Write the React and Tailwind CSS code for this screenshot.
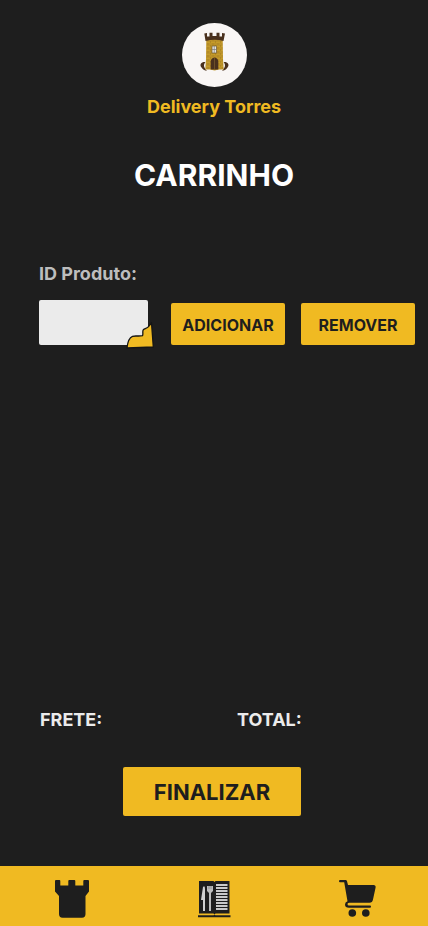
function TowerLogo() {
  return (
    <svg viewBox="0 0 65 64" className="h-16 w-[65px]" role="img" aria-label="Delivery Torres">
      <defs>
        <pattern id="bricks" width="5" height="4" patternUnits="userSpaceOnUse">
          <rect width="5" height="4" fill="#c59b2a" />
          <path d="M0 0H5M0 2H5M1 0V2M3.500 2V4" stroke="#94701c" strokeWidth="0.4" />
        </pattern>
      </defs>
      <ellipse cx="32.500" cy="32" rx="32.500" ry="32" fill="#f9f6f5" />
      <path d="M23.500 39C19.500 38.500 17 41.500 19.500 44.500C21 46.700 23 47.500 25 48C22.500 45 20.500 42.500 23.500 39Z" fill="#49301d" />
      <path d="M41.500 39C45.500 38.500 48 41.500 45.500 44.500C44 46.700 42 47.500 40 48C42.500 45 44.500 42.500 41.500 39Z" fill="#49301d" />
      <path d="M24.300 16H40.700L41 36L41.700 46.500H37L32.500 47.500L28 46.500H23.300L24 36Z" fill="url(#bricks)" />
      <path d="M22.300 10.500L25 10V13.500H27.500V9.700H30.500V13H34.500V9.700H37.500V13.500H40V10L43 10.500L41.500 18Q32.500 15.500 23.500 18Z" fill="#49301d" />
      <rect x="30" y="23" width="4.500" height="7" fill="#e7e5df" stroke="#6e582d" strokeWidth="0.700" />
      <path d="M32.250 23V30M30 26.500H34.500" stroke="#77797a" strokeWidth="0.700" />
      <path d="M28.700 46.500V38.500Q29 35 32.500 34.500Q36 35 36.300 38.500V46.500Z" fill="#49301d" />
      <path d="M32.500 35V46" stroke="#926e32" strokeWidth="0.500" />
    </svg>
  );
}

function TowerIcon() {
  return (
    <svg viewBox="0 0 34 38" className="h-[38px] w-[34px]" fill="#1e1e1e" aria-hidden="true">
      <path d="M0 1Q0 0 1 0H4.500Q5.300 0 5.300 1V5.500H13.300V1Q13.300 0 14.300 0H19.300Q20.300 0 20.300 1V5.500H28.300V1Q28.300 0 29.300 0H33Q34 0 34 1V11.500L30.500 16V34Q30.500 37.700 27 37.700H7.500Q4 37.700 4 34V16L0 11.500Z" />
    </svg>
  );
}

function MenuIcon() {
  return (
    <svg viewBox="0 0 33 38" className="h-[38px] w-[33px]" aria-hidden="true">
      <path d="M1 1H15.500L16.500 2L17.500 1H31.500V33.500H17.500L16.500 34.500L15.500 33.500H1Z" fill="#1e1e1e" />
      <path d="M0 35.300H15.500L16.500 34.800L17.500 35.300H32.500V37.300H0Z" fill="#1e1e1e" />
      <path d="M5 7Q7 5 7 9V31H5V20H3Z" fill="#d0d0d0" />
      <path d="M9 6H15V11L13 13V31H11V13L9 11Z" fill="#bcbcbc" />
      <path d="M11 6V9M13 6V9" stroke="#777" strokeWidth="0.600" />
      <path d="M18 5H29.500M18 8H29.500M18 11H29.500M18 14H29.500M18 17H29.500M18 20H29.500M18 23H29.500M18 26H29.500M18 29H29.500" stroke="#c9c9c9" strokeWidth="2" />
    </svg>
  );
}

function CartIcon() {
  return (
    <svg viewBox="0 0 37 38" className="h-[38px] w-[37px]" fill="#1e1e1e" aria-hidden="true">
      <path d="M1 0H6.500Q7.700 0 8 1.200L9 5H34.500Q37 5 36.600 7.500L34 19.500Q33.300 22.700 30.500 22.700H10.500Q8.500 22.700 8.500 24Q8.500 25.500 10 25.500H31Q32 25.500 32 26.600Q32 27.800 31 27.800H10Q6 27.800 6 24.500Q6 22 8.500 21.300L5.200 2.300H1Q0 2.300 0 1.200Q0 0 1 0Z" />
      <circle cx="13.300" cy="33" r="3.800" />
      <circle cx="26.800" cy="33" r="3.800" />
    </svg>
  );
}

export default function App() {
  return (
    <div className="flex min-h-screen flex-col bg-[#1e1e1e] font-['Inter',sans-serif] font-bold">
      <header className="flex flex-col items-center pt-[23px]">
        <TowerLogo />
        <p className="mt-2 text-lg leading-6 text-[#f0ba22]">Delivery Torres</p>
        <h1 className="mt-9 text-3xl leading-10 text-white">CARRINHO</h1>
      </header>

      <main className="flex grow flex-col">
        <form className="mt-[67px] pr-[13px] pl-[39px]" onSubmit={(event) => event.preventDefault()}>
          <label htmlFor="product-id" className="block text-lg leading-6 text-[#bdbdbd]">
            ID Produto:
          </label>
          <div className="mt-[14px] flex items-end gap-4">
            <div className="relative mr-[7px] grow">
              <input id="product-id" type="text" className="block h-[45px] w-full min-w-0 rounded-xs bg-[#ebebeb] px-3 text-[#1e1e1e]" />
              <svg viewBox="0 0 28 27" className="pointer-events-none absolute -right-1.5 -bottom-1 h-[27px] w-7" aria-hidden="true">
                <path d="M1 26C1.500 21 3.500 15.500 6.500 14.300C9 13.500 13 14.500 16.500 13.700C17.500 11.500 16 9 17.500 7.500C19 6.500 22 6 23 4L25.500 0.800L27.300 25Z" fill="#f0ba22" stroke="#151515" strokeWidth="1.300" strokeLinejoin="round" />
              </svg>
            </div>
            <button type="submit" className="h-[42px] w-[114px] shrink-0 rounded-xs bg-[#f0ba22] pt-0.5 text-base text-[#1e1e1e]">
              ADICIONAR
            </button>
            <button type="button" className="h-[42px] w-[114px] shrink-0 rounded-xs bg-[#f0ba22] pt-0.5 text-base text-[#1e1e1e]">
              REMOVER
            </button>
          </div>
        </form>

        <section className="mt-auto flex flex-col pb-[50px]">
          <div className="grid grid-cols-2 gap-x-[6px] pl-10 text-lg leading-6 text-[#ebebeb]">
            <p>FRETE:</p>
            <p>TOTAL:</p>
          </div>
          <div className="mt-[35px] flex justify-center pr-1">
            <button type="button" className="h-[49px] w-[178px] rounded-xs bg-[#f0ba22] pt-0.5 text-[22px] text-[#1e1e1e]">
              FINALIZAR
            </button>
          </div>
        </section>
      </main>

      <nav className="grid h-[60px] grid-cols-3 items-center justify-items-center gap-x-0.5 bg-[#f0ba22] pt-1.5 pl-0.5" aria-label="Principal">
        <a href="#inicio" aria-label="Início">
          <TowerIcon />
        </a>
        <a href="#cardapio" aria-label="Cardápio">
          <MenuIcon />
        </a>
        <a href="#carrinho" aria-label="Carrinho">
          <CartIcon />
        </a>
      </nav>
    </div>
  );
}
